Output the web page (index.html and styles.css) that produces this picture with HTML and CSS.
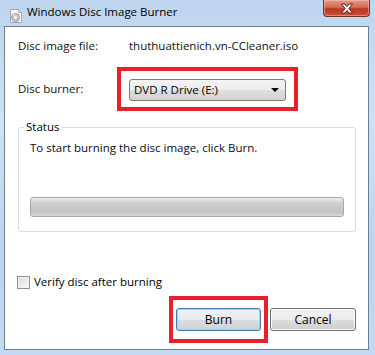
FILE: index.html
```html
<!DOCTYPE html>
<html lang="en">
<head>
<meta charset="UTF-8" />
<title>Windows Disc Image Burner</title>
<link rel="stylesheet" href="styles.css">
</head>
<body>
<div class="window">
    <div class="titlebar">
        <svg class="app-icon" width="16" height="16" viewBox="0 0 16 16">
            <path d="M2.5 1.5h8l3 3v10h-11z" fill="#f7f7f7" stroke="#a9a9a9"/>
            <path d="M10.5 1.5v3h3" fill="#e4e4e4" stroke="#a9a9a9"/>
            <circle cx="7.5" cy="9.5" r="4" fill="#c9c9c9" stroke="#9a9a9a"/>
            <circle cx="7.5" cy="9.5" r="1.2" fill="#fff"/>
            <path d="M5 8a3 3 0 0 1 2-2" stroke="#eee" fill="none"/>
        </svg>
        <span class="title">Windows Disc Image Burner</span>
        <button class="close" aria-label="Close">
            <svg width="14" height="11" viewBox="0 0 14 11">
                <path d="M1.5 1h3.5l2 2.6 2-2.6h3.5l-3.7 4.5 3.7 4.5h-3.5l-2-2.6-2 2.6h-3.5l3.7-4.5z" fill="#fff" stroke="#5c2a22" stroke-width="1" stroke-linejoin="round"/>
            </svg>
        </button>
    </div>

    <div class="client">
        <div class="fields">
            <span class="label">Disc image file:</span>
            <span class="value">thuthuattienich.vn-CCleaner.iso</span>
            <span class="label">Disc burner:</span>
            <div class="mark mark-combo">
                <div class="combo">
                    <span>DVD R Drive (E:)</span>
                    <span class="arrow"></span>
                </div>
            </div>
        </div>

        <fieldset class="status">
            <legend>Status</legend>
            <p class="status-text">To start burning the disc image, click Burn.</p>
            <div class="progress"></div>
        </fieldset>

        <label class="verify"><span class="checkbox"></span>Verify disc after burning</label>

        <div class="actions">
            <div class="mark mark-btn">
                <button class="btn btn-default">Burn</button>
            </div>
            <button class="btn">Cancel</button>
        </div>
    </div>
</div>
</body>
</html>
```

FILE: styles.css
```css
body {
    margin: 0;
    font-family: 'Open Sans', 'Liberation Sans', sans-serif;
    font-size: 11.5px;
    color: #111;
}
.window {
    width: 375px;
    height: 355px;
    overflow: hidden;
    background: linear-gradient(180deg, #bed5ee 0%, #cfe1f4 35%, #bcd4ee 70%, #c3daf2 100%);
}

/* title bar */
.titlebar {
    display: flex;
    align-items: flex-start;
    height: 26px;
}
.app-icon {
    margin: 8px 0 0 8px;
    flex: none;
}
.title {
    margin: 4px 0 0 3px;
    line-height: 16px;
    color: #000;
}
.close {
    margin: 0 5px 0 auto;
    width: 47px;
    height: 17px;
    padding: 0;
    border: 1px solid #7a2f23;
    border-top: none;
    border-radius: 0 0 4px 4px;
    background: linear-gradient(180deg, #e29a88 0%, #d46c52 45%, #bd3520 55%, #cc5038 100%);
    box-shadow: inset 0 0 0 1px rgba(255, 210, 200, 0.45);
    display: flex;
    align-items: center;
    justify-content: center;
}

/* white client area */
.client {
    margin-left: 4px;
    width: 338px;
    height: 297px;
    padding: 11px 12px 14px 13px;
    background: #fff;
    border: 1px solid #6e7f93;
}
.fields {
    display: grid;
    grid-template-columns: 99px auto;
    row-gap: 13px;
    align-items: center;
    justify-content: start;
    line-height: 16px;
}
.value {
    padding-left: 12px;
}

/* red annotation boxes */
.mark {
    border: 4px solid #e8202a;
}
.mark-combo {
    padding: 8px 8px 6px 8px;
}
.mark-btn {
    padding: 8px 3px;
}

.combo {
    height: 20px;
    width: 147px;
    padding: 0 4px;
    border: 1px solid #7a7a7a;
    border-radius: 3px;
    background: linear-gradient(180deg, #f4f4f4 0%, #ececec 50%, #dedede 51%, #d2d2d2 100%);
    display: flex;
    align-items: center;
    justify-content: space-between;
    color: #000;
}
.arrow {
    width: 0;
    height: 0;
    border-left: 4px solid transparent;
    border-right: 4px solid transparent;
    border-top: 4px solid #000;
    margin-right: 2px;
}

/* status group */
.status {
    margin: 8px 0 0 0;
    padding: 0 11px 14px 11px;
    border: 1px solid #d5dfe5;
    border-radius: 3px;
    min-width: 0;
}
.status legend {
    padding: 0 2px;
    margin-left: -6px;
    line-height: 16px;
    color: #000;
}
.status-text {
    margin: 5px 0 0 0;
    line-height: 16px;
    color: #0a0a1e;
}
.progress {
    margin-top: 41px;
    height: 18px;
    border: 1px solid #a8a8a8;
    border-radius: 3px;
    background: linear-gradient(180deg, #f0f0f0 0%, #d4d4d4 20%, #c8c8c8 50%, #c6c6c6 80%, #dadada 100%);
}

/* checkbox */
.verify {
    display: flex;
    align-items: center;
    margin-top: 42px;
    margin-left: -1px;
    line-height: 16px;
    color: #000;
}
.checkbox {
    width: 11px;
    height: 11px;
    border: 1px solid #8e8f8f;
    margin-right: 4px;
    background: linear-gradient(135deg, #dcdcdc, #f6f6f6);
    box-shadow: inset 0 0 0 1px #f4f4f4;
}

/* buttons */
.actions {
    display: flex;
    justify-content: flex-end;
    align-items: center;
    gap: 2px;
    margin-top: 6px;
}
.btn {
    width: 86px;
    height: 23px;
    padding: 0;
    font: inherit;
    font-size: 12px;
    color: #000;
    border: 1px solid #707070;
    border-radius: 3px;
    background: linear-gradient(180deg, #f2f2f2 0%, #ebebeb 50%, #dddddd 51%, #cfcfcf 100%);
    box-shadow: inset 0 0 0 1px #fcfcfc;
}
.btn-default {
    width: 85px;
    border-color: #3c7fb1;
    box-shadow: inset 0 0 0 1px #9ad6f7;
    background: linear-gradient(180deg, #f0f3f5 0%, #e7ebee 50%, #d8dde1 51%, #cdd3d8 100%);
}
```
